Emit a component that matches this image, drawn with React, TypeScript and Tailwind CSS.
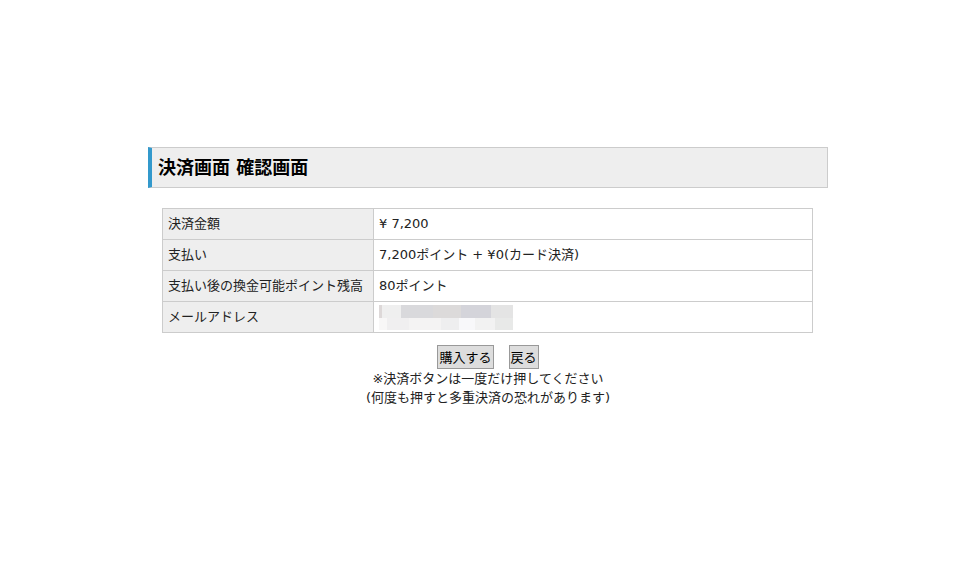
export default function App() {
  const rows: { label: string; value: React.ReactNode }[] = [
    { label: '決済金額', value: '¥ 7,200' },
    { label: '支払い', value: '7,200ポイント + ¥0(カード決済)' },
    { label: '支払い後の換金可能ポイント残高', value: '80ポイント' },
    { label: 'メールアドレス', value: <Masked /> },
  ];

  return (
    <div
      className="w-[960px] h-[570px] bg-white text-[13px] text-[#222]"
      style={{ fontFamily: '"DejaVu Sans", "Noto Sans CJK JP", sans-serif' }}
    >
      <div className="ml-[148px] w-[680px] pt-[147px]">
        <h2 className="h-[41px] flex items-center bg-[#eeeeee] border border-[#cccccc] border-l-4 border-l-[#3399cc] pl-[6px] text-[18px] font-bold text-black">
          決済画面 確認画面
        </h2>

        <table className="ml-[14px] mt-[20px] w-[651px] border-collapse border border-[#cccccc]">
          <tbody>
            {rows.map((r) => (
              <tr key={r.label} className="h-[31px]">
                <td className="w-[211px] bg-[#eeeeee] border border-[#cccccc] px-[5px] py-0">{r.label}</td>
                <td className="border border-[#cccccc] px-[5px] py-0">{r.value}</td>
              </tr>
            ))}
          </tbody>
        </table>

        <div className="mt-[12px] flex justify-center gap-[15px]">
          <button className="h-[24px] px-[1px] bg-[#dddddd] border border-[#999999] text-[13px] text-black leading-none">
            購入する
          </button>
          <button className="h-[24px] px-[1px] bg-[#dddddd] border border-[#999999] text-[13px] text-black leading-none">
            戻る
          </button>
        </div>
        <p className="text-center leading-[19px]">※決済ボタンは一度だけ押してください</p>
        <p className="text-center leading-[19px]">(何度も押すと多重決済の恐れがあります)</p>
      </div>
    </div>
  );
}

function Masked() {
  const top = [
    ['#ddd8d8', 3],
    ['#efefef', 19],
    ['#d9d9dc', 32],
    ['#dcdada', 28],
    ['#d4d4da', 30],
    ['#e4e4e4', 22],
  ] as const;
  const bottom = [
    ['#f8f7f7', 8],
    ['#f0eff0', 22],
    ['#f4f3f3', 32],
    ['#eeeeef', 18],
    ['#f8f8fa', 16],
    ['#f2f2f2', 20],
    ['#e8e9e8', 18],
  ] as const;
  return (
    <div className="flex flex-col w-[134px]">
      <div className="flex h-[13px]">
        {top.map(([c, w], i) => (
          <div key={i} className="h-full" style={{ background: c, width: w }} />
        ))}
      </div>
      <div className="flex h-[12px]">
        {bottom.map(([c, w], i) => (
          <div key={i} className="h-full" style={{ background: c, width: w }} />
        ))}
      </div>
    </div>
  );
}
